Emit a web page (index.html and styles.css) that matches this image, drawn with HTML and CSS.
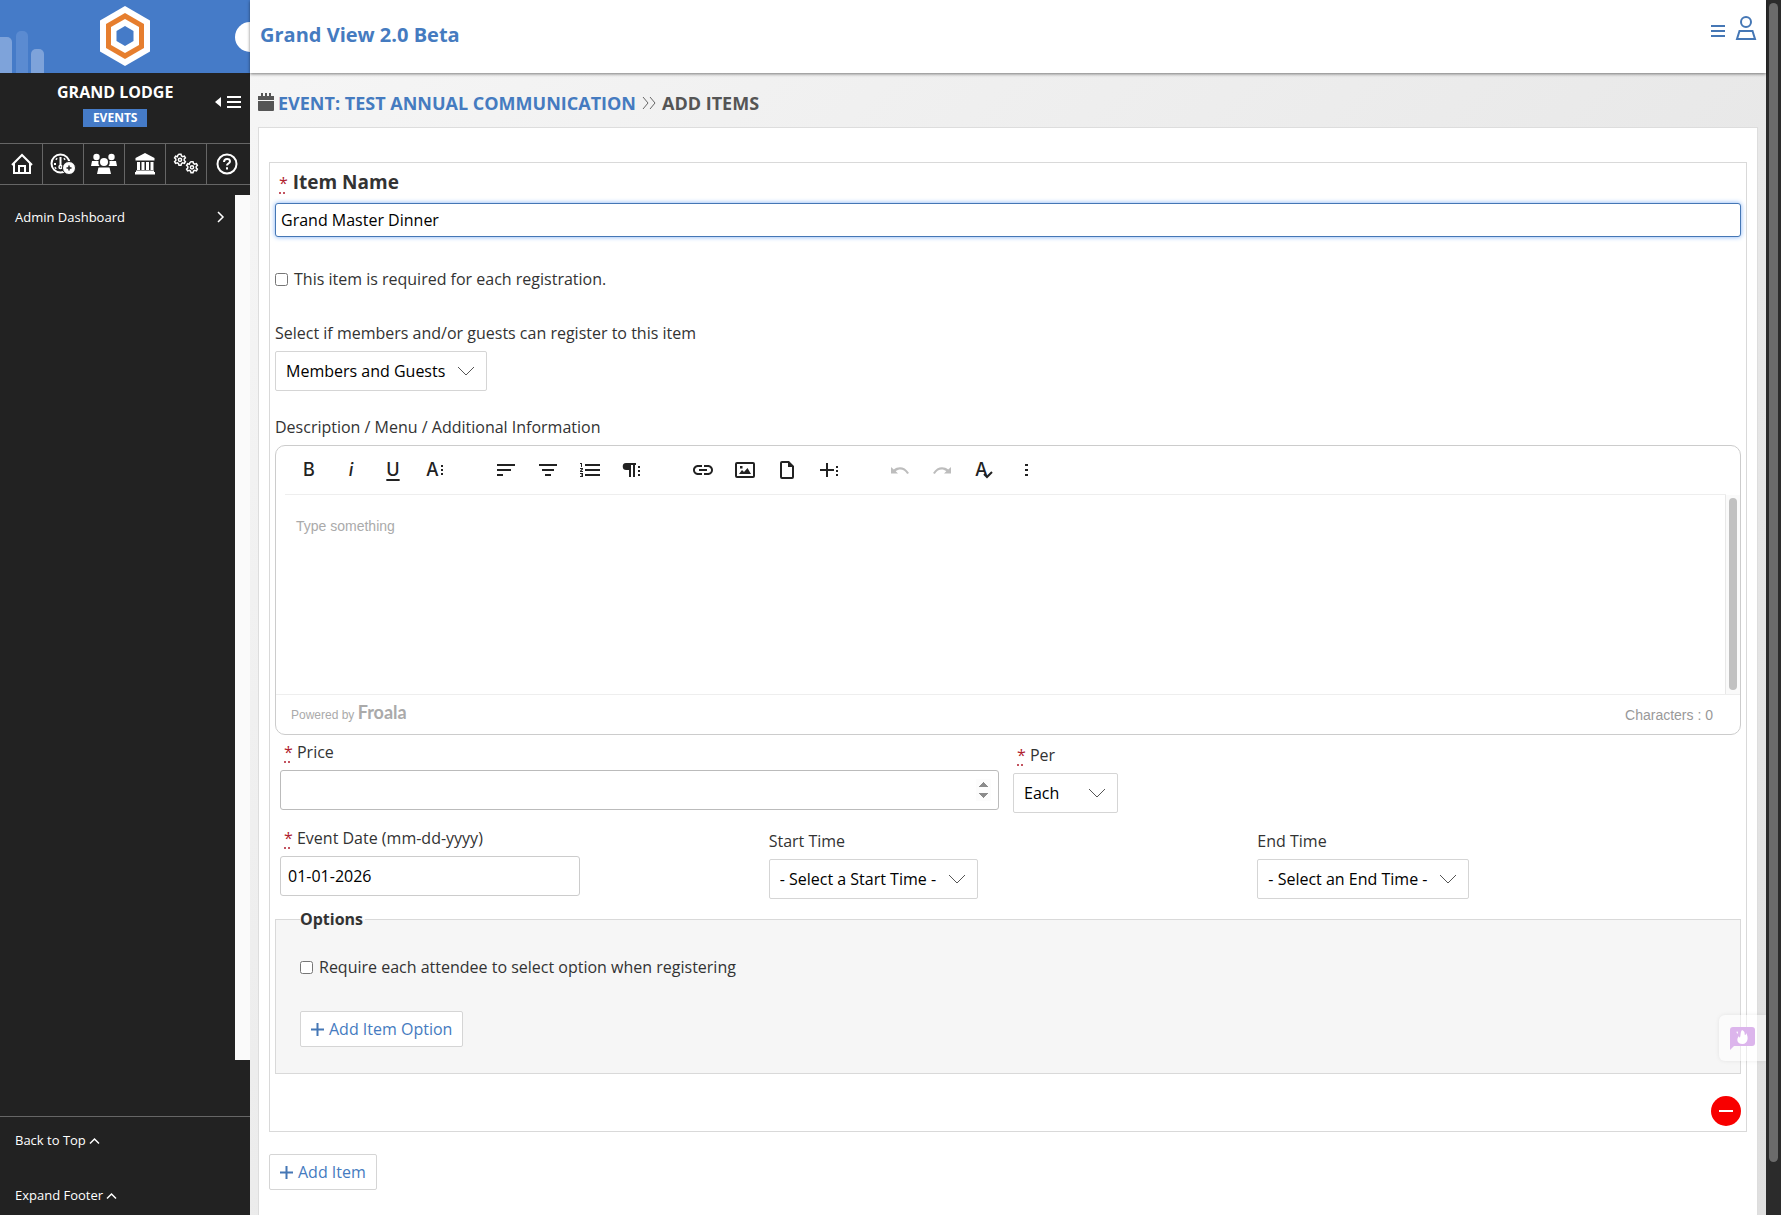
FILE: index.html
```html
<!DOCTYPE html>
<html lang="en">

<head>
    <meta charset="utf-8">
    <title>Grand View 2.0 Beta</title>

    <link rel="stylesheet" href="styles.css">
</head>

<body>

    <aside class="sidebar">
        <div class="logo-bar">
            <svg class="bars" width="44" height="42" viewBox="0 0 44 42">
                <path d="M0 42V6h7a5 5 0 0 1 5 5v31z" fill="#7ea3da" />
                <path d="M16 42V5a5 5 0 0 1 5-5h2a5 5 0 0 1 5 5v37z" fill="#5b8bd1" />
                <path d="M31 42V23a5 5 0 0 1 5-5h3a5 5 0 0 1 5 5v19z" fill="#7ea3da" />
            </svg>
            <svg class="logo" width="50" height="60" viewBox="0 0 50 60">
                <path d="M25 0l25 14.500v31L25 60 0 45.500v-31z" fill="#fff" />
                <path d="M25 7l19 11v24L25 53 6 42V18z" fill="#e67e2e" />
                <path d="M25 13l14 8v18l-14 8-14-8V21z" fill="#fff" />
                <path d="M25 20l8.500 5v10L25 40l-8.500-5V25z" fill="#457bc8" />
            </svg>
            <span class="notch"></span>
        </div>

        <div class="lodge">
            <div class="lodge-title">
                <strong>GRAND LODGE</strong>
                <span class="tag">EVENTS</span>
            </div>
            <button class="collapse" aria-label="Collapse menu">
                <svg width="26" height="14" viewBox="0 0 26 14">
                    <path d="M6 2v10L0 7z" fill="#fff" />
                    <path d="M12 2h14M12 7h14M12 12h14" stroke="#fff" stroke-width="2" />
                </svg>
            </button>
        </div>

        <nav class="icon-nav">
            <a href="#" aria-label="Home">
                <svg width="22" height="22" viewBox="0 0 22 22" fill="none" stroke="#fff" stroke-width="2">
                    <path d="M1 12L11 2l10 10M3 10.500V20h16v-9.500M8 20v-7h6v7" />
                </svg>
            </a>
            <a href="#" aria-label="Dashboard">
                <svg width="26" height="22" viewBox="0 0 26 22" fill="none" stroke="#fff">
                    <circle cx="10.500" cy="10.500" r="9" stroke-width="2" />
                    <path d="M10.500 4v9" stroke-width="2" />
                    <circle cx="10.500" cy="14" r="1.500" stroke-width="1.500" />
                    <path d="M4 11h2M15 11h2M6 5.500l1 1M15 5.500l-1 1M5 15.500l1-1" stroke-width="2" />
                    <circle cx="19" cy="15" r="6.500" fill="#fff" stroke="#222" />
                    <path d="M19 12.500v5M16.500 15h5" stroke="#222" stroke-width="1.500" />
                </svg>
            </a>
            <a href="#" aria-label="Members">
                <svg width="26" height="22" viewBox="0 0 26 22" fill="#fff">
                    <circle cx="5.500" cy="4" r="3.200" />
                    <circle cx="20.500" cy="4" r="3.200" />
                    <path d="M1 8h6.500a6 6 0 0 0 1 5H0zM25 8h-6.500a6 6 0 0 1-1 5H26z" />
                    <circle cx="13" cy="9" r="4" />
                    <path d="M7.500 14.500h11L20 21H6z" />
                </svg>
            </a>
            <a href="#" aria-label="Lodge">
                <svg width="22" height="22" viewBox="0 0 22 22" fill="#fff">
                    <path d="M11 0l9.500 5v2.500h-19V5zM3 9h3v8H3zM7.500 9h3v8h-3zM12 9h3v8h-3zM16.500 9h3v8h-3zM2 17.500h18V19h1v2.500H1V19h1z" />
                </svg>
            </a>
            <a href="#" aria-label="Settings">
                <svg width="26" height="22" viewBox="0 0 26 22" fill="none" stroke="#fff" stroke-width="1.500">
                    <g id="gear">
                        <path d="M5 2l1-.8h2L8.500 3l1.200.7 1.700-.6 1 1.800L11.200 6v1.500l1.200 1.200-1 1.700-1.700-.5-1.200.7L8 12.300H6l-.5-1.700-1.200-.7-1.700.5-1-1.700 1.200-1.200V6L1.600 4.900l1-1.800 1.700.6z" />
                        <circle cx="7" cy="6.800" r="1.600" />
                    </g>
                    <use href="#gear" x="12" y="7.500" />
                </svg>
            </a>
            <a href="#" aria-label="Help">
                <svg width="22" height="22" viewBox="0 0 22 22" fill="none" stroke="#fff" stroke-width="2">
                    <circle cx="11" cy="11" r="9.500" />
                    <path d="M8 9c0-4 6-4 6-.8 0 2.300-3 2.300-3 4.300M11 14.300v2.200" />
                </svg>
            </a>
        </nav>

        <div class="menu">
            <ul>
                <li>
                    <a href="#">Admin Dashboard
                        <svg width="8" height="12" viewBox="0 0 8 12" fill="none" stroke="#fff" stroke-width="1.500">
                            <path d="M1 1l5 5-5 5" />
                        </svg>
                    </a>
                </li>
            </ul>
            <span class="menu-track"></span>
        </div>

        <div class="sidebar-footer">
            <a href="#">Back to Top
                <svg width="11" height="8" viewBox="0 0 11 8" fill="none" stroke="#fff" stroke-width="1.500">
                    <path d="M1 6.500l4.500-4.500L10 6.500" />
                </svg>
            </a>
            <a href="#">Expand Footer
                <svg width="11" height="8" viewBox="0 0 11 8" fill="none" stroke="#fff" stroke-width="1.500">
                    <path d="M1 6.500l4.500-4.500L10 6.500" />
                </svg>
            </a>
        </div>
    </aside>

    <main class="main">
        <header class="top-bar">
            <h1>Grand View 2.0 Beta</h1>
            <div class="top-actions">
                <button aria-label="Menu">
                    <svg width="14" height="14" viewBox="0 0 14 14" stroke="#4577b5" stroke-width="2">
                        <path d="M0 2h14M0 7h14M0 12h14" />
                    </svg>
                </button>
                <button aria-label="Account">
                    <svg width="22" height="26" viewBox="0 0 22 26" fill="none" stroke="#4577b5" stroke-width="2">
                        <circle cx="11" cy="7" r="5" />
                        <path d="M4.500 16h13l2.500 8H2z" />
                    </svg>
                </button>
            </div>
        </header>

        <h2 class="breadcrumb">
            <svg width="16" height="19" viewBox="0 0 16 19" fill="#555">
                <path d="M0 3h16v4H0zM0 8h16v9a1 1 0 0 1-1 1H1a1 1 0 0 1-1-1zM3 0h2v4H3zM7 0h2v4H7zM11 0h2v4h-2z" />
            </svg>
            <a href="#">EVENT: TEST ANNUAL COMMUNICATION</a>
            <svg class="arrows" width="14" height="14" viewBox="0 0 14 14" fill="none" stroke="#666">
                <path d="M1 1l5 6-5 6M8 1l5 6-5 6" />
            </svg>
            <span>ADD ITEMS</span>
        </h2>

        <form class="card">
            <section class="item">
                <label class="item-label" for="item-name"><abbr title="required">*</abbr> Item Name</label>
                <input type="text" class="text-input item-name" id="item-name" value="Grand Master Dinner">

                <div class="check">
                    <input type="checkbox" id="required">
                    <label for="required">This item is required for each registration.</label>
                </div>

                <div class="field">
                    <label for="audience">Select if members and/or guests can register to this item</label>
                    <select id="audience">
                        <option>Members and Guests</option>
                    </select>
                </div>

                <div class="field editor-field">
                    <label for="description">Description / Menu / Additional Information</label>
                    <div class="editor">
                        <div class="toolbar">
                            <div class="group">
                                <button type="button" class="letter" aria-label="Bold">B</button>
                                <button type="button" class="letter italic" aria-label="Italic">i</button>
                                <button type="button" class="letter underline" aria-label="Underline">U</button>
                                <button type="button" class="letter" aria-label="More text">A<svg width="4" height="12" viewBox="0 0 4 12"><path d="M1 1h2v2H1zM1 5h2v2H1zM1 9h2v2H1z" /></svg></button>
                            </div>
                            <div class="group">
                                <button type="button" aria-label="Align left">
                                    <svg width="24" height="24" viewBox="0 0 24 24"><path d="M3 6h18v2H3zM3 11h14v2H3zM3 16h6v2H3z" /></svg>
                                </button>
                                <button type="button" aria-label="Align center">
                                    <svg width="24" height="24" viewBox="0 0 24 24"><path d="M3 6h18v2H3zM6 11h12v2H6zM9 16h6v2H9z" /></svg>
                                </button>
                                <button type="button" aria-label="Ordered list">
                                    <svg width="24" height="24" viewBox="0 0 24 24"><path d="M7 6h15v2H7zM7 11h15v2H7zM7 16h15v2H7zM2 5h2v4H3V6H2zM2 10h3v1.200L3.300 13H5v1H2v-1l1.700-2H2zM2 15h3v4H2v-1h2v-.6H3v-.8h1V16H2z" /></svg>
                                </button>
                                <button type="button" aria-label="More paragraph">
                                    <svg width="24" height="24" viewBox="0 0 24 24"><path d="M6 5h10v2h-1v12h-2V7h-2v12H9v-7H6.500a3.500 3.500 0 0 1-.5-7zM18 8h2v2h-2zM18 12h2v2h-2zM18 16h2v2h-2z" /></svg>
                                </button>
                            </div>
                            <div class="group">
                                <button type="button" aria-label="Insert link">
                                    <svg width="24" height="24" viewBox="0 0 24 24"><path d="M3.900 12c0-1.710 1.390-3.100 3.100-3.100h4V7H7c-2.760 0-5 2.240-5 5s2.240 5 5 5h4v-1.900H7c-1.710 0-3.100-1.390-3.100-3.100zM8 13h8v-2H8v2zm9-6h-4v1.900h4c1.710 0 3.100 1.390 3.100 3.100s-1.390 3.100-3.100 3.100h-4V17h4c2.760 0 5-2.240 5-5s-2.240-5-5-5z" /></svg>
                                </button>
                                <button type="button" aria-label="Insert image">
                                    <svg width="24" height="24" viewBox="0 0 24 24"><path d="M4 4h16a2 2 0 0 1 2 2v12a2 2 0 0 1-2 2H4a2 2 0 0 1-2-2V6a2 2 0 0 1 2-2zm0 2v12h16V6zM6 16l3-4 2 2 3.500-4 3.500 6zM7 8h2.500v2.500H7z" /></svg>
                                </button>
                                <button type="button" aria-label="Insert file">
                                    <svg width="24" height="24" viewBox="0 0 24 24"><path d="M7 3h7l5 5v11a2 2 0 0 1-2 2H7a2 2 0 0 1-2-2V5a2 2 0 0 1 2-2zm0 2v14h10V9h-4V5z" /></svg>
                                </button>
                                <button type="button" aria-label="More rich">
                                    <svg width="24" height="24" viewBox="0 0 24 24"><path d="M9 5h2v6h6v2h-6v6H9v-6H3v-2h6zM19 8h2v2h-2zM19 12h2v2h-2zM19 16h2v2h-2z" /></svg>
                                </button>
                            </div>
                            <div class="group">
                                <button type="button" aria-label="Undo" disabled>
                                    <svg width="24" height="24" viewBox="0 0 24 24"><path d="M3 9l2.800 2.500c4.200-3.500 11-3.500 15.200 3.500l-1.800 1c-3.200-5.500-8.200-5.500-11.500-2.800L10 15.500H3z" /></svg>
                                </button>
                                <button type="button" aria-label="Redo" disabled>
                                    <svg width="24" height="24" viewBox="0 0 24 24"><path d="M21 9l-2.800 2.500c-4.200-3.500-11-3.500-15.200 3.500l1.800 1c3.200-5.500 8.200-5.500 11.500-2.800L14 15.500h7z" /></svg>
                                </button>
                                <button type="button" class="letter spell" aria-label="Spell check">A<svg width="10" height="8" viewBox="0 0 10 8"><path d="M1 3l3 3 5-5" fill="none" stroke="#222" stroke-width="2" /></svg></button>
                                <button type="button" aria-label="More">
                                    <svg width="24" height="24" viewBox="0 0 24 24"><path d="M11 6h3v2h-3zM11 11h3v2h-3zM11 16h3v2h-3z" /></svg>
                                </button>
                            </div>
                        </div>
                        <div class="editor-body">
                            <textarea id="description" placeholder="Type something"></textarea>
                            <div class="editor-track"><span></span></div>
                        </div>
                        <div class="editor-footer">
                            <span class="powered">Powered by <b>Froala</b></span>
                            <span>Characters : 0</span>
                        </div>
                    </div>
                </div>

                <div class="row">
                    <div class="field price-field">
                        <label for="price"><abbr title="required">*</abbr> Price</label>
                        <input type="number" class="text-input price" id="price">
                    </div>
                    <div class="field select-field">
                        <label for="per"><abbr title="required">*</abbr> Per</label>
                        <select id="per">
                            <option>Each</option>
                        </select>
                    </div>
                </div>

                <div class="row">
                    <div class="field">
                        <label for="date"><abbr title="required">*</abbr> Event Date (mm-dd-yyyy)</label>
                        <input type="text" class="text-input date" id="date" value="01-01-2026">
                    </div>
                    <div class="field select-field">
                        <label for="start">Start Time</label>
                        <select id="start">
                            <option>- Select a Start Time -</option>
                        </select>
                    </div>
                    <div class="field select-field">
                        <label for="end">End Time</label>
                        <select id="end">
                            <option>- Select an End Time -</option>
                        </select>
                    </div>
                </div>

                <fieldset class="options">
                    <legend>Options</legend>
                    <div class="check">
                        <input type="checkbox" id="require-option">
                        <label for="require-option">Require each attendee to select option when registering</label>
                    </div>
                    <button type="button" class="add-button">
                        <svg width="13" height="13" viewBox="0 0 13 13" stroke="#4577b5" stroke-width="2"><path d="M6.500 0v13M0 6.500h13" /></svg>
                        Add Item Option
                    </button>
                </fieldset>

                <button type="button" class="remove" aria-label="Remove item">
                    <svg width="14" height="2" viewBox="0 0 14 2"><path d="M0 0h14v2H0z" fill="#fff" /></svg>
                </button>
            </section>

            <button type="button" class="add-button">
                <svg width="13" height="13" viewBox="0 0 13 13" stroke="#4577b5" stroke-width="2"><path d="M6.500 0v13M0 6.500h13" /></svg>
                Add Item
            </button>
        </form>

        <button class="feedback" aria-label="Feedback">
            <svg width="25" height="23" viewBox="0 0 25 23">
                <path d="M3 0h19a3 3 0 0 1 3 3v13a3 3 0 0 1-3 3H4l-4 4V3a3 3 0 0 1 3-3z" fill="#dcb5ec" />
                <path d="M12 3c4 2 2 4 3 5 1 0 1-1 1-2 3 4 2 11-3.500 11S6 12 9 9c0 1 .5 1.500 1 1.500C11 8 10 6 12 3zM7 4l1 1.500L7.500 7 6.500 5.500z" fill="#fff" />
            </svg>
        </button>
    </main>

    <div class="page-track"><span></span></div>

</body>

</html>
```

FILE: styles.css
```css
* {
    box-sizing: border-box;
}

body {
    display: flex;
    margin: 0;
    height: 100vh;
    overflow: hidden;
    font-family: "Open Sans", sans-serif;
    font-size: 16px;
    line-height: 24px;
    color: #333;
}

a {
    color: inherit;
    text-decoration: none;
}

button {
    padding: 0;
    border: 0;
    background: none;
    font: inherit;
}

svg {
    flex: none;
}

/* Sidebar */

.sidebar {
    display: flex;
    flex-direction: column;
    flex: none;
    width: 250px;
    background: #222;
    color: #fff;
}

.logo-bar {
    position: relative;
    display: flex;
    justify-content: center;
    height: 73px;
    padding-top: 6px;
    overflow: hidden;
    background: #457bc8;
}

.bars {
    position: absolute;
    left: 0;
    bottom: 0;
}

.notch {
    position: absolute;
    right: -15px;
    top: 22px;
    width: 30px;
    height: 30px;
    border-radius: 50%;
    background: #fff;
}

.lodge {
    display: flex;
    justify-content: space-between;
    height: 70px;
    padding: 7px 9px 0 57px;
}

.lodge-title {
    display: flex;
    flex-direction: column;
    align-items: center;
    line-height: 24px;
}

.tag {
    margin-top: 5px;
    padding: 0 10px;
    background: #457bc8;
    font-size: 12px;
    font-weight: bold;
    line-height: 18px;
}

.collapse {
    align-self: flex-start;
    margin-top: 11px;
}

.icon-nav {
    display: flex;
    border-top: 1px solid #666;
    border-bottom: 1px solid #666;
}

.icon-nav a {
    display: flex;
    justify-content: center;
    align-items: center;
    width: 41px;
    height: 40px;
    border-left: 1px solid #666;
}

.icon-nav a:first-child {
    width: 42px;
    padding-left: 2px;
    border-left: 0;
}

.icon-nav a:last-child {
    flex: 1;
    padding-right: 4px;
}

.menu {
    display: flex;
    flex: 1;
    margin-top: 10px;
    font-size: 13px;
}

.menu ul {
    flex: 1;
    margin: 0;
    padding: 10px 10px 0 15px;
    list-style: none;
}

.menu a {
    display: flex;
    justify-content: space-between;
    align-items: center;
}

.menu-track {
    width: 15px;
    background: #fafafa;
}

.sidebar-footer {
    display: flex;
    flex-direction: column;
    gap: 31px;
    margin-top: 56px;
    padding: 11px 15px 8px;
    border-top: 1px solid #666;
    font-size: 13px;
}

/* Top bar */

.main {
    display: flex;
    flex-direction: column;
    flex: 1;
    position: relative;
    min-width: 0;
    background: linear-gradient(135deg, #f6f6f6, #dfdfdf);
}

.top-bar {
    display: flex;
    flex: none;
    justify-content: space-between;
    height: 73px;
    padding: 12px 9px 0 10px;
    background: #fff;
    box-shadow: 0 1px 3px rgba(0, 0, 0, 0.5);
}

.top-bar h1 {
    margin: 8px 0 0;
    font-size: 20px;
    line-height: 30px;
    color: #457bc0;
}

.top-actions {
    display: flex;
    align-items: flex-start;
    gap: 10px;
}

.top-actions button {
    display: flex;
    align-items: center;
    height: 38px;
}

.top-actions button:last-child {
    height: 32px;
}

.breadcrumb {
    display: flex;
    align-items: center;
    flex: none;
    gap: 4px;
    height: 54px;
    margin: 0;
    padding: 5px 8px 0;
    font-size: 18px;
    line-height: 24px;
    color: #555;
}

.breadcrumb a {
    color: #457bc0;
}

.arrows {
    margin: 0 2px;
}

/* Card */

.card {
    flex: 1 0 auto;
    margin: 0 8px;
    padding: 34px 10px 40px;
    border: 1px solid #ddd;
    background: #fff;
}

.item {
    display: flex;
    flex-direction: column;
    margin-bottom: 22px;
    padding: 7px 5px 5px;
    border: 1px solid #d9d9d9;
}

abbr {
    color: #b01c2e;
    text-decoration: underline dotted;
    text-underline-offset: 4px;
}

.item-label {
    padding-left: 4px;
    margin-bottom: 8px;
    font-size: 19px;
    font-weight: bold;
}

.item-label abbr {
    font-size: 16px;
    font-weight: normal;
}

.text-input {
    height: 40px;
    padding: 0 7px;
    border: 1px solid #ccc;
    border-radius: 3px;
    background: #fff;
    font: inherit;
    color: #000;
}

.item-name {
    height: 34px;
    padding: 0 5px;
    border-color: #4577b5;
    box-shadow: 0 0 5px #7fb0f5;
}

.check {
    display: flex;
    align-items: center;
    gap: 6px;
    margin: 30px 0;
}

.check input {
    width: 13px;
    height: 13px;
    margin: 0;
}

.field {
    display: flex;
    flex-direction: column;
    align-items: flex-start;
    gap: 6px;
}

select {
    height: 40px;
    padding: 0 40px 0 10px;
    border: 1px solid #d5d5d5;
    border-radius: 2px;
    appearance: none;
    background: #fff url("data:image/svg+xml,%3Csvg xmlns='http://www.w3.org/2000/svg' width='18' height='11' fill='none' stroke='%23555'%3E%3Cpath d='M1 1l8 8 8-8'/%3E%3C/svg%3E") no-repeat right 11px center;
    font: inherit;
    color: #000;
}

/* Editor */

.editor-field {
    align-items: stretch;
    margin: 24px 0 5px;
}

.editor {
    border: 1px solid #ccc;
    border-radius: 10px;
    background: #fff;
    font-family: "Liberation Sans", sans-serif;
}

.toolbar {
    display: flex;
    gap: 29px;
    height: 49px;
    margin: 0 14px 0 9px;
    padding-left: 3px;
    border-bottom: 1px solid #eee;
}

.group {
    display: flex;
}

.toolbar button {
    display: flex;
    justify-content: center;
    align-items: center;
    width: 42px;
    fill: #222;
    color: #222;
}

.toolbar button:disabled {
    fill: #bdbdbd;
}

.toolbar .letter {
    gap: 1px;
    font-family: Inter, sans-serif;
    font-size: 18px;
    font-weight: 500;
}

.toolbar .italic {
    font-style: italic;
}

.toolbar .underline {
    text-decoration: underline 2px;
    text-underline-offset: 3px;
}

.spell svg {
    margin: 10px 0 0 -6px;
}

.editor-body {
    display: flex;
    height: 200px;
    border-bottom: 1px solid #eee;
}

.editor-body textarea {
    flex: 1;
    padding: 19px 20px;
    border: 0;
    background: none;
    resize: none;
    font-family: "Liberation Sans", sans-serif;
    font-size: 14px;
    line-height: 24px;
}

.editor-body textarea::placeholder {
    color: #aaa;
}

.editor-track {
    display: flex;
    justify-content: center;
    width: 15px;
    padding: 3px 0 4px;
    border-left: 1px solid #e8e8e8;
    background: #fafafa;
}

.editor-track span {
    width: 8px;
    border-radius: 4px;
    background: #c1c1c1;
}

.editor-footer {
    display: flex;
    justify-content: space-between;
    align-items: center;
    height: 39px;
    padding: 0 27px 0 15px;
    font-size: 14px;
    color: #999;
}

.powered {
    font-size: 12px;
    color: #aaa;
}

.powered b {
    font-family: Lato, sans-serif;
    font-size: 18px;
    line-height: 20px;
}

/* Form rows */

.row {
    display: flex;
    margin-bottom: 13px;
}

.row .field {
    flex: 1 1 0;
    padding: 0 5px;
}

.row .price-field {
    flex: 0 0 50%;
    padding-right: 9px;
}

.row .select-field {
    padding-top: 3px;
}

.row abbr {
    margin-left: 4px;
}

.row:last-of-type {
    margin-bottom: 8px;
}

.price {
    width: 100%;
    border-color: #bbb;
}

.price::-webkit-inner-spin-button {
    opacity: 1;
}

.date {
    width: 300px;
    max-width: 100%;
}

#per {
    min-width: 105px;
}

.options {
    margin: 0 0 22px;
    padding: 24px 24px 26px;
    border: 1px solid #d9d9d9;
    background: #f6f6f6;
}

.options legend {
    padding: 0 2px 0 0;
    font-weight: bold;
}

.options .check {
    margin: 0 0 32px;
}

.add-button {
    display: inline-flex;
    align-items: center;
    gap: 5px;
    height: 36px;
    padding: 0 10px;
    border: 1px solid #d5d5d5;
    border-radius: 2px;
    background: #fff;
    color: #457bc0;
}

.remove {
    display: flex;
    justify-content: center;
    align-items: center;
    align-self: flex-end;
    width: 30px;
    height: 30px;
    border-radius: 50%;
    background: #f80000;
}

/* Floating feedback button */

.feedback {
    position: absolute;
    right: 0;
    bottom: 154px;
    display: flex;
    justify-content: center;
    align-items: center;
    width: 47px;
    height: 46px;
    border-radius: 6px 0 0 6px;
    background: rgba(255, 255, 255, 0.5);
    box-shadow: 0 0 4px rgba(0, 0, 0, 0.08);
}

/* Page scrollbar */

.page-track {
    display: flex;
    justify-content: center;
    flex: none;
    width: 15px;
    padding: 3px 0 53px;
    background: #2b2b2b;
}

.page-track span {
    width: 9px;
    border-radius: 5px;
    background: #6b6b6b;
}
```
